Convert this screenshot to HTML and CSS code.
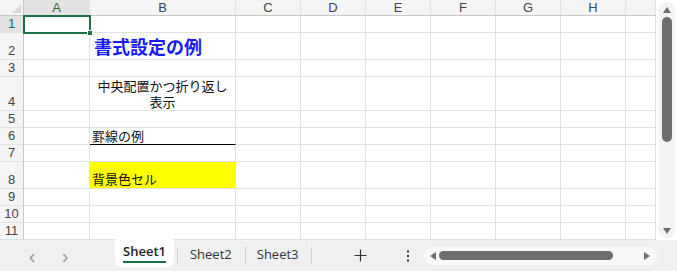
FILE: index.html
```html
<!DOCTYPE html>
<html lang="ja">
<head>
	<meta charset="UTF-8">
	<title>Sheet1</title>
	<link rel="stylesheet" href="styles.css">
</head>
<body>
	<div class="book">
		<div class="main">
			<div class="sheet">
				<div class="grid">
					<div class="corner"></div><div class="ch on">A</div><div class="ch">B</div><div class="ch">C</div><div class="ch">D</div><div class="ch">E</div><div class="ch">F</div><div class="ch">G</div><div class="ch">H</div><div class="ch"></div>

					<div class="rh on">1</div><div class="c"></div><div class="c"></div><div class="c"></div><div class="c"></div><div class="c"></div><div class="c"></div><div class="c"></div><div class="c"></div><div class="c"></div>
					<div class="rh">2</div><div class="c"></div><div class="c title">書式設定の例</div><div class="c"></div><div class="c"></div><div class="c"></div><div class="c"></div><div class="c"></div><div class="c"></div><div class="c"></div>
					<div class="rh">3</div><div class="c"></div><div class="c"></div><div class="c"></div><div class="c"></div><div class="c"></div><div class="c"></div><div class="c"></div><div class="c"></div><div class="c"></div>
					<div class="rh">4</div><div class="c"></div><div class="c wrap">中央配置かつ折り返し表示</div><div class="c"></div><div class="c"></div><div class="c"></div><div class="c"></div><div class="c"></div><div class="c"></div><div class="c"></div>
					<div class="rh">5</div><div class="c"></div><div class="c"></div><div class="c"></div><div class="c"></div><div class="c"></div><div class="c"></div><div class="c"></div><div class="c"></div><div class="c"></div>
					<div class="rh">6</div><div class="c"></div><div class="c ruled">罫線の例</div><div class="c"></div><div class="c"></div><div class="c"></div><div class="c"></div><div class="c"></div><div class="c"></div><div class="c"></div>
					<div class="rh">7</div><div class="c"></div><div class="c"></div><div class="c"></div><div class="c"></div><div class="c"></div><div class="c"></div><div class="c"></div><div class="c"></div><div class="c"></div>
					<div class="rh">8</div><div class="c"></div><div class="c fill">背景色セル</div><div class="c"></div><div class="c"></div><div class="c"></div><div class="c"></div><div class="c"></div><div class="c"></div><div class="c"></div>
					<div class="rh">9</div><div class="c"></div><div class="c"></div><div class="c"></div><div class="c"></div><div class="c"></div><div class="c"></div><div class="c"></div><div class="c"></div><div class="c"></div>
					<div class="rh">10</div><div class="c"></div><div class="c"></div><div class="c"></div><div class="c"></div><div class="c"></div><div class="c"></div><div class="c"></div><div class="c"></div><div class="c"></div>
					<div class="rh">11</div><div class="c"></div><div class="c"></div><div class="c"></div><div class="c"></div><div class="c"></div><div class="c"></div><div class="c"></div><div class="c"></div><div class="c"></div>
				</div>
				<!-- 選択中のセル A1 -->
				<div class="cursor"><span class="handle"></span></div>
			</div>
			<div class="vscroll">
				<div class="vtrack">
					<span class="tri tri-up"></span>
					<div class="vthumb"></div>
					<span class="tri tri-down"></span>
				</div>
			</div>
		</div>

		<div class="tabbar">
			<div class="nav">
				<span class="arrow">&lsaquo;</span>
				<span class="arrow">&rsaquo;</span>
			</div>
			<div class="tabs">
				<span class="tab active">Sheet1</span>
				<span class="tab">Sheet2</span>
				<span class="tab">Sheet3</span>
			</div>
			<span class="add">
				<svg width="13" height="13" viewBox="0 0 13 13"><path d="M6.5 0.5v12M0.5 6.5h12" stroke="#333" stroke-width="1.2" fill="none"/></svg>
			</span>
			<span class="more">
				<svg width="4" height="12" viewBox="0 0 4 12"><rect x="1" y="0.5" width="2" height="2" fill="#333"/><rect x="1" y="5" width="2" height="2" fill="#333"/><rect x="1" y="9.5" width="2" height="2" fill="#333"/></svg>
			</span>
			<div class="hscroll">
				<span class="tri tri-left"></span>
				<div class="hthumb"></div>
				<span class="tri tri-right"></span>
			</div>
		</div>
	</div>
</body>
</html>
```

FILE: styles.css
```css
* { box-sizing: border-box; }
body { margin: 0; background: #fff; font-family: "Noto Sans CJK JP", "Liberation Sans", sans-serif; }
.book { width: 677px; height: 271px; overflow: hidden; }
.main { display: flex; height: 240px; }

/* grid */
.sheet { position: relative; width: 656px; height: 240px; overflow: hidden; }
.grid { display: grid; grid-template-columns: 24px 66px 146px 65px 65px 65px 65px 65px 65px 30px;
	grid-template-rows: 16px 17px 27px 17px 34px 17px 17px 17px 27px 17px 17px 17px; }
.corner { background: #f5f5f5; border-right: 1px solid #c8c8c8; border-bottom: 1px solid #c8c8c8; position: relative; }
.corner:after { content: ""; position: absolute; right: 2px; bottom: 2px; border-style: solid; border-width: 0 0 9px 9px; border-color: transparent transparent #dadada transparent; }
.ch { background: #f5f5f5; border-right: 1px solid #e1e1e1; border-bottom: 1px solid #c8c8c8; color: #444; font: 13px/16px "Liberation Sans", Arial, sans-serif; text-align: center; }
.ch.on { background: #e2e2e2; color: #1d6b41; border-bottom: 1px solid #1e7145; }
.rh { background: #f5f5f5; border-right: 1px solid #c8c8c8; border-bottom: 1px solid #e1e1e1; color: #444; font: 13px/16px "Liberation Sans", Arial, sans-serif; text-align: center; display: flex; align-items: flex-end; justify-content: center; padding-bottom: 0; }
.rh.on { background: #e2e2e2; color: #1d6b41; }
.c { border-right: 1px solid #e1e1e1; border-bottom: 1px solid #e1e1e1; display: flex; align-items: flex-end; padding: 0 2px; font-size: 13px; line-height: 16px; color: #111; white-space: nowrap; overflow: visible; }

.title { font-size: 18px; line-height: 22px; font-weight: bold; color: #1a1aff; padding-left: 4px; padding-bottom: 2px; }
.wrap { white-space: normal; text-align: center; justify-content: center; padding: 0 4px; }
.ruled { border-bottom: 1px solid #000; }
.fill { background: #ffff00; border-right-color: #ffff00; padding-bottom: 1px; }

.cursor { position: absolute; left: 23px; top: 15px; width: 68px; height: 19px; border: 2px solid #1e7145; }
.handle { position: absolute; right: -4px; bottom: -4px; width: 6px; height: 6px; background: #1e7145; border: 1px solid #fff; }

/* vertical scrollbar */
.vscroll { width: 21px; height: 240px; padding: 2px 2px 2px 3px; }
.vtrack { height: 100%; background: #f3f3f3; border-radius: 8px; display: flex; flex-direction: column; align-items: center; padding-top: 5px; }
.vthumb { width: 10px; height: 125px; margin-top: 4px; background: #6e6e6e; border-radius: 5px; }
.tri { display: block; width: 0; height: 0; border-style: solid; }
.tri-up { border-width: 0 4px 6px 4px; border-color: transparent transparent #6e6e6e transparent; }
.tri-down { border-width: 6px 4px 0 4px; border-color: #6e6e6e transparent transparent transparent; margin-top: auto; margin-bottom: 4px; }
.tri-left { border-width: 4px 6px 4px 0; border-color: transparent #6e6e6e transparent transparent; }
.tri-right { border-width: 4px 0 4px 6px; border-color: transparent transparent transparent #6e6e6e; margin-left: auto; }

/* sheet tabs */
.tabbar { display: flex; align-items: center; height: 31px; background: #f0f0f0; }
.nav { display: flex; width: 115px; padding-left: 26px; gap: 21px; }
.arrow { color: #9a9a9a; font: 20px/20px "Liberation Sans", sans-serif; width: 12px; text-align: center; }
.tabs { display: flex; align-self: stretch; padding-top: 0; }
.tab { position: relative; padding: 0 13px 0 12px; font: 13px/27px "Open Sans", "Noto Sans", sans-serif; color: #333; margin-top: 1px; }
.tab + .tab:before { content: ""; position: absolute; left: 0; top: 6px; height: 17px; border-left: 1px solid #d0d0d0; }
.tab:last-child:after { content: ""; position: absolute; right: 0; top: 6px; height: 17px; border-left: 1px solid #d0d0d0; }
.tab.active { background: #fff; border-radius: 4px 4px 6px 6px; font-weight: 600; color: #222; padding: 0 8px; margin-top: -2px; height: 29px; }
.tab.active:after { content: ""; position: absolute; left: 8px; right: 8px; bottom: 4px; border-bottom: 2px solid #1e7145; }
.tab.active + .tab:before { left: 3px; }
.tab.active + .tab { padding-left: 16px; }
.add { margin-left: 42px; display: flex; }
.more { margin-left: 39px; display: flex; }
.hscroll { display: flex; align-items: center; width: 234px; height: 18px; margin-left: 14px; padding: 0 8px 0 6px; background: #f8f8f8; border-radius: 9px; }
.hthumb { width: 174px; height: 9px; margin-left: 3px; background: #6e6e6e; border-radius: 5px; }
```
